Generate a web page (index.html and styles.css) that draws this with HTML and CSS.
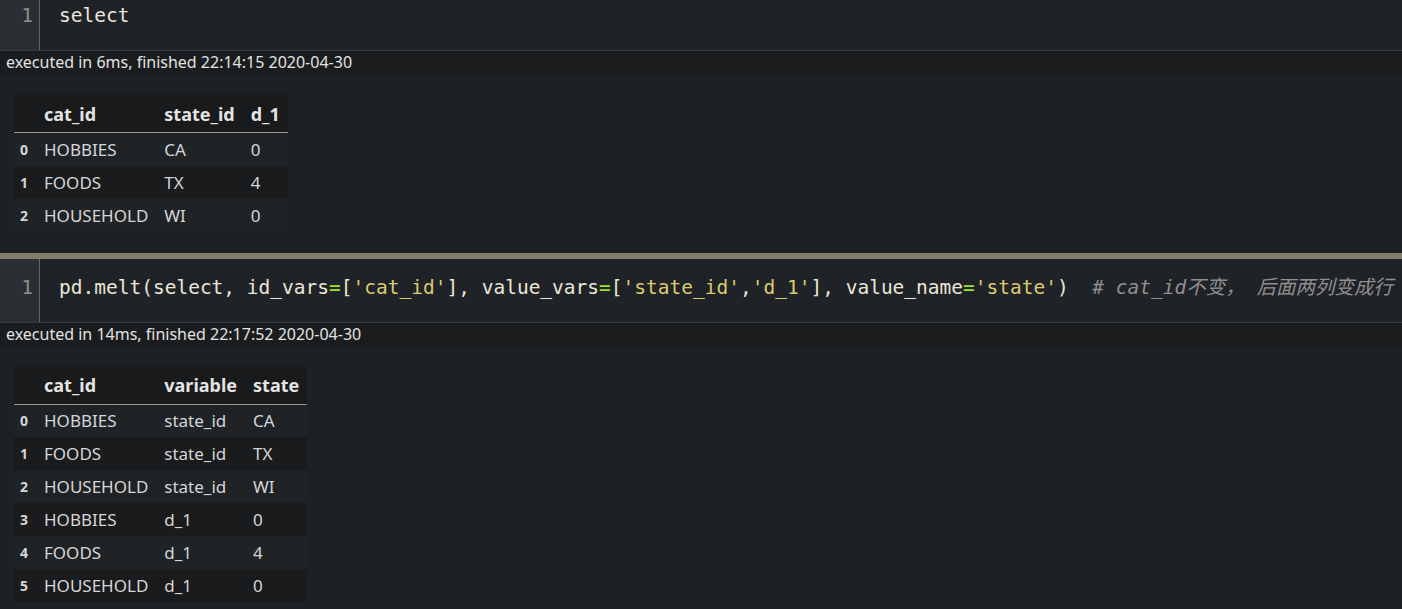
FILE: index.html
```html
<!DOCTYPE html>
<html>
<head>
<meta charset="utf-8">
<link rel="stylesheet" href="styles.css">
</head>
<body>
<div class="notebook">
  <div class="cell">
    <div class="input">
      <div class="gutter">1</div>
      <div class="code">select</div>
    </div>
    <div class="exec">executed in 6ms, finished 22:14:15 2020-04-30</div>
    <div class="output">
      <table class="df">
        <thead>
          <tr><th class="idx"></th><th>cat_id</th><th>state_id</th><th>d_1</th></tr>
        </thead>
        <tbody>
          <tr><th class="idx">0</th><td>HOBBIES</td><td>CA</td><td>0</td></tr>
          <tr><th class="idx">1</th><td>FOODS</td><td>TX</td><td>4</td></tr>
          <tr><th class="idx">2</th><td>HOUSEHOLD</td><td>WI</td><td>0</td></tr>
        </tbody>
      </table>
    </div>
  </div>
  <div class="separator"></div>
  <div class="cell">
    <div class="input">
      <div class="gutter">1</div>
      <div class="code">pd.melt(select, id_vars<span class="op">=</span>[<span class="str">'cat_id'</span>], value_vars<span class="op">=</span>[<span class="str">'state_id'</span>,<span class="str">'d_1'</span>], value_name<span class="op">=</span><span class="str">'state'</span>)  <span class="cm"># cat_id不变， 后面两列变成行</span></div>
    </div>
    <div class="exec">executed in 14ms, finished 22:17:52 2020-04-30</div>
    <div class="output">
      <table class="df">
        <thead>
          <tr><th class="idx"></th><th>cat_id</th><th>variable</th><th>state</th></tr>
        </thead>
        <tbody>
          <tr><th class="idx">0</th><td>HOBBIES</td><td>state_id</td><td>CA</td></tr>
          <tr><th class="idx">1</th><td>FOODS</td><td>state_id</td><td>TX</td></tr>
          <tr><th class="idx">2</th><td>HOUSEHOLD</td><td>state_id</td><td>WI</td></tr>
          <tr><th class="idx">3</th><td>HOBBIES</td><td>d_1</td><td>0</td></tr>
          <tr><th class="idx">4</th><td>FOODS</td><td>d_1</td><td>4</td></tr>
          <tr><th class="idx">5</th><td>HOUSEHOLD</td><td>d_1</td><td>0</td></tr>
        </tbody>
      </table>
    </div>
  </div>
</div>
</body>
</html>
```
FILE: styles.css
```css
html, body {
  margin: 0;
  padding: 0;
  background: #1e2124;
  overflow: hidden;
}
.notebook {
  margin-top: -13px;
  font-family: "Noto Sans", "Liberation Sans", sans-serif;
}
.input {
  display: flex;
  height: 63px;
  background: #1f2226;
  border-bottom: 1px solid #3a3d40;
}
.gutter {
  width: 40px;
  box-sizing: border-box;
  background: #2b2f33;
  border-right: 1px solid #6b645b;
  color: #8e8e8e;
  font-family: "DejaVu Sans Mono", monospace;
  font-size: 19.5px;
  line-height: 31px;
  padding: 13px 6px 0 0;
  text-align: right;
}
.code {
  padding: 13px 0 0 19px;
  font-family: "DejaVu Sans Mono", "Noto Sans CJK SC", monospace;
  font-size: 19.5px;
  line-height: 31px;
  color: #e9e6d8;
  white-space: pre;
}
.op { color: #9fe22c; }
.str { color: #dccb6c; }
.cm { color: #8f8f8f; font-style: italic; }
.exec {
  height: 23px;
  background: #1a1c1e;
  color: #e2e2e2;
  font-size: 16px;
  line-height: 23px;
  padding-left: 6px;
}
.output {
  background: #1e2124;
  padding: 21px 0 21px 14px;
}
.separator {
  height: 6px;
  background: #847a6e;
}
.df {
  border-collapse: collapse;
  font-size: 17px;
  color: #d6d6d6;
}
.df th, .df td {
  padding: 0 8px;
  text-align: left;
  white-space: nowrap;
}
.df thead th {
  height: 37px;
  font-size: 18px;
  font-weight: bold;
  color: #e4e4e4;
  background: #181a1c;
  border-bottom: 1px solid #9c948d;
}
.df tbody tr { height: 33px; }
.df tbody tr:nth-child(odd) { background: #1f2326; }
.df tbody tr:nth-child(even) { background: #191b1d; }
.df th.idx {
  font-size: 14px;
  font-weight: bold;
  width: 8px;
  padding: 0 8px 0 6px;
}
```
